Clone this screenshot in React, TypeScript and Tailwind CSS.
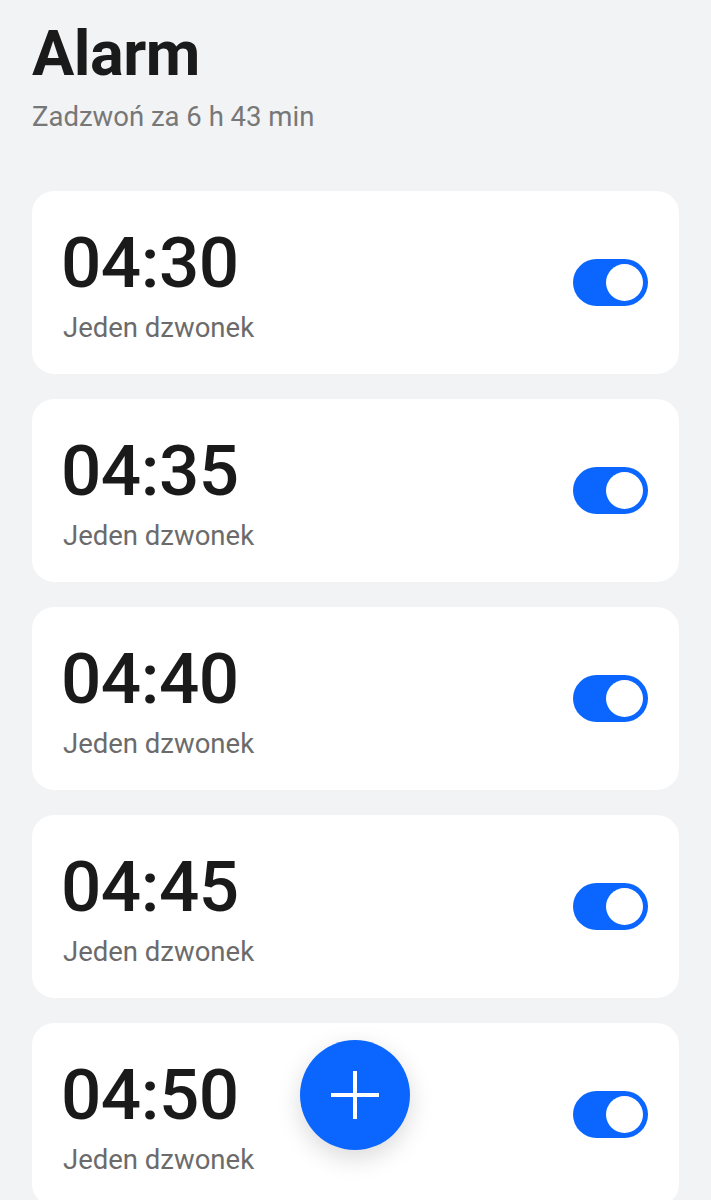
const alarms = ['04:30', '04:35', '04:40', '04:45', '04:50']

function Toggle() {
  return (
    <div className="w-[75px] h-[47px] rounded-full bg-[#0a66ff] flex items-center justify-end pr-[5px]">
      <div className="w-[37px] h-[37px] rounded-full bg-white" />
    </div>
  )
}

function AlarmCard({ time }: { time: string }) {
  return (
    <div className="h-[183px] shrink-0 rounded-[22px] bg-white flex items-center justify-between pl-[29px] pr-[31px]">
      <div className="flex flex-col">
        <span className="text-[71px] leading-[80px] font-medium text-[#1a1a1a] tracking-[-0.5px]">{time}</span>
        <span className="text-[27.5px] leading-[30px] text-[#6b6b6b] pl-[2px] mt-[10px]">Jeden dzwonek</span>
      </div>
      <Toggle />
    </div>
  )
}

export default function App() {
  return (
    <div
      className="relative h-[1200px] overflow-hidden bg-[#f2f3f5]"
      style={{ fontFamily: 'Roboto, "Noto Sans", sans-serif' }}
    >
      <div className="px-[32px] pt-[14px]">
        <h1 className="text-[63px] leading-[80px] font-bold text-[#1a1a1a] tracking-[-0.5px]">Alarm</h1>
        <p className="text-[27.5px] leading-[36px] text-[#777777] mt-[5px]">Zadzwoń za 6 h 43 min</p>
      </div>
      <div className="flex flex-col gap-[25px] px-[32px] mt-[56px]">
        {alarms.map((t) => (
          <AlarmCard key={t} time={t} />
        ))}
      </div>
      <button className="absolute left-[300px] top-[1040px] w-[110px] h-[110px] rounded-full bg-[#0a66ff] flex items-center justify-center shadow-[0_8px_24px_rgba(0,0,0,0.15)]">
        <svg width="50" height="50" viewBox="0 0 50 50">
          <path d="M25 1v48M1 25h48" stroke="white" strokeWidth="4" />
        </svg>
      </button>
    </div>
  )
}
